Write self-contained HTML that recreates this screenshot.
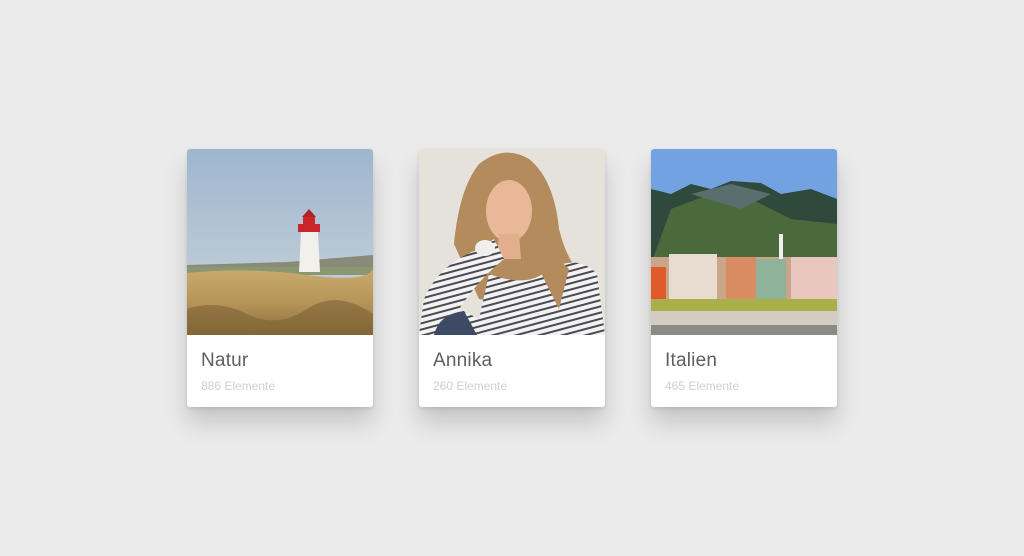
<!DOCTYPE html>
<html><head><meta charset="utf-8"><style>
html,body{margin:0;padding:0;width:1024px;height:556px;background:#ebebeb;overflow:hidden;font-family:"Liberation Sans",sans-serif}
.card{position:absolute;top:149px;width:186px;height:258px;background:#fff;border-radius:3px;overflow:hidden;box-shadow:0 16px 24px rgba(0,0,0,.16),0 2px 4px rgba(0,0,0,.1)}
.card svg{display:block}
.t{position:absolute;left:14px;top:201px;font-size:19px;color:#5e5e5e;letter-spacing:.2px}
.s{position:absolute;left:14px;top:230px;font-size:12px;color:#cfcfcf}
</style></head><body>
<div class="card" style="left:187px">
<svg width="186" height="186"><defs><linearGradient id="sk" x1="0" y1="0" x2="0" y2="1"><stop offset="0" stop-color="#9fb6d0"/><stop offset="1" stop-color="#cbd5d8"/></linearGradient><linearGradient id="gr" x1="0" y1="0" x2="0" y2="1"><stop offset="0" stop-color="#c8ab6c"/><stop offset=".5" stop-color="#b7955a"/><stop offset="1" stop-color="#8d6f3d"/></linearGradient></defs>
<rect width="186" height="186" fill="url(#sk)"/>
<path d="M0 116 L100 113 L186 106 L186 118 L0 120Z" fill="#8a8a78"/>
<rect y="118" width="186" height="8" fill="#8a9770"/>
<path d="M0 124 Q60 118 120 126 T186 120 L186 186 L0 186Z" fill="url(#gr)"/>
<path d="M0 160 Q30 150 60 165 T120 160 T186 165 L186 186 L0 186Z" fill="#7d6236" opacity=".6"/>
<path d="M114 83 L131 83 L133 123 L112 123Z" fill="#f2f0ea"/>
<rect x="111" y="75" width="22" height="8" fill="#c8262b"/>
<rect x="116" y="68" width="12" height="8" fill="#c8262b"/>
<path d="M115 68 L122 60 L129 68Z" fill="#b02228"/>
</svg>
<div class="t">Natur</div><div class="s">886 Elemente</div></div>

<div class="card" style="left:419px">
<svg width="186" height="186"><defs><pattern id="st" width="6" height="6" patternUnits="userSpaceOnUse" patternTransform="rotate(-15)"><rect width="6" height="6" fill="#f2f2f2"/><rect width="6" height="2" fill="#4a4a52"/></pattern></defs>
<rect width="186" height="186" fill="#e5e2dc"/>
<path d="M35 95 Q40 40 60 15 Q85 -5 110 10 Q135 30 140 80 Q150 120 170 130 L120 160 L60 150 Z" fill="#b38b5c"/>
<ellipse cx="90" cy="62" rx="23" ry="31" fill="#e9b899"/>
<path d="M80 85 L100 85 L102 110 L78 110Z" fill="#e3ae8e"/>
<path d="M5 150 Q20 115 60 100 L75 90 L85 110 Q60 130 40 160 L60 170 L70 125 Q110 140 130 120 Q160 105 178 125 L186 186 L0 186 Z" fill="url(#st)"/>
<path d="M110 100 Q125 130 140 160 L150 120 Q130 100 110 100Z" fill="#b38b5c"/>
<path d="M15 186 Q20 165 45 162 L58 186Z" fill="#3c4a66"/>
<ellipse cx="66" cy="99" rx="10" ry="8" fill="#f0efec"/>
</svg>
<div class="t">Annika</div><div class="s">260 Elemente</div></div>

<div class="card" style="left:651px">
<svg width="186" height="186">
<rect width="186" height="186" fill="#72a2e2"/>
<path d="M0 40 L20 45 L40 35 L60 40 L80 32 L110 34 L130 45 L160 40 L186 50 L186 110 L0 120Z" fill="#2f4a3c"/>
<path d="M20 60 L60 45 L100 50 L140 70 L186 75 L186 110 L0 115Z" fill="#4a6a3c"/>
<path d="M40 45 L80 35 L120 45 L90 60Z" fill="#5a6e6e"/>
<rect x="0" y="108" width="186" height="55" fill="#c9a58a"/>
<rect x="0" y="118" width="15" height="40" fill="#e05a2c"/>
<rect x="18" y="105" width="48" height="55" fill="#e8dcd0"/>
<rect x="75" y="108" width="30" height="45" fill="#d98b62"/>
<rect x="105" y="110" width="30" height="42" fill="#8fb39a"/>
<rect x="140" y="108" width="46" height="50" fill="#e9c6c0"/>
<rect x="128" y="85" width="4" height="25" fill="#eee"/>
<rect x="0" y="150" width="186" height="14" fill="#a9b04a"/>
<rect x="0" y="162" width="186" height="24" fill="#d2ccc2"/>
<rect x="0" y="176" width="186" height="10" fill="#8c8a88"/>
</svg>
<div class="t">Italien</div><div class="s">465 Elemente</div></div>
</body></html>
